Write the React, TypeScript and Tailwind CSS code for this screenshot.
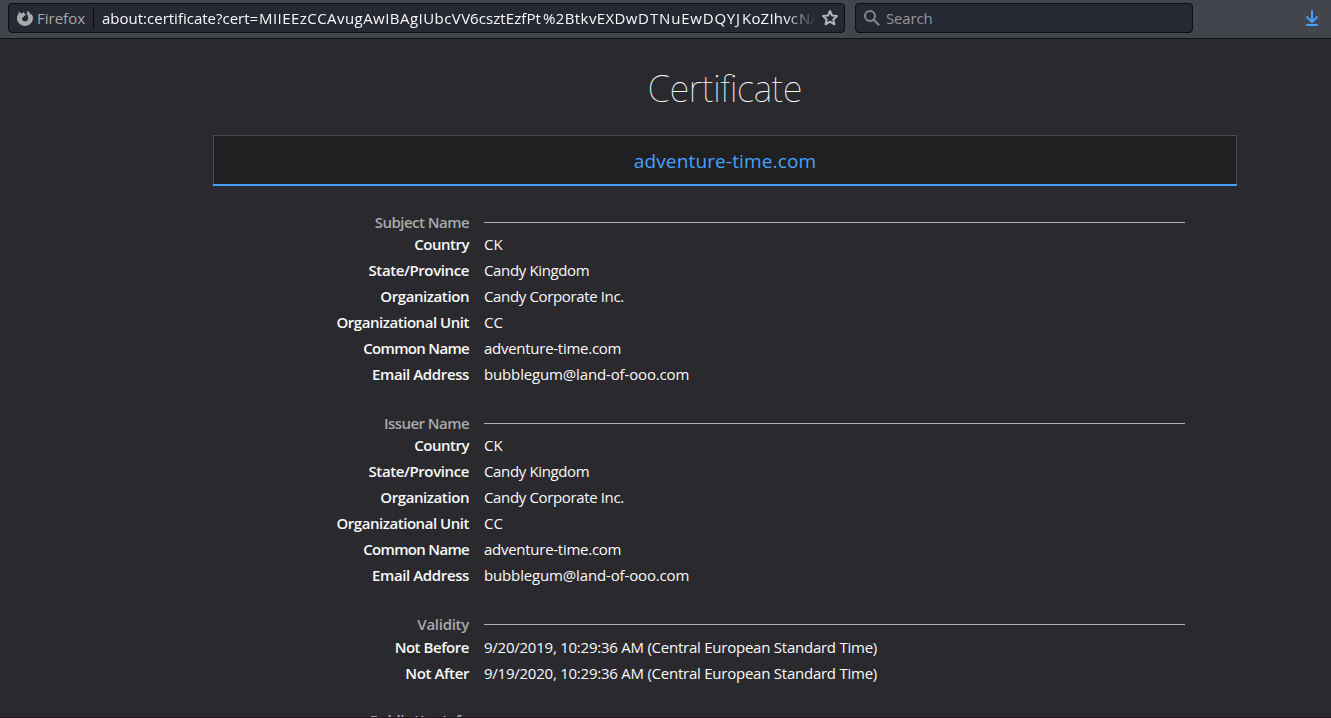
import type { ReactNode } from "react";

type Row = { label: string; value: string; labelSpacing: string; spacing: string };
type Section = { title: string; spacing: string; gaps: string; titleGap: string; rows: Row[] };

const nameRows: Row[] = [
  { label: "Country", value: "CK", labelSpacing: "tracking-[-0.5px]", spacing: "tracking-[0px]" },
  { label: "State/Province", value: "Candy Kingdom", labelSpacing: "tracking-[-0.39px]", spacing: "tracking-[-0.36px]" },
  { label: "Organization", value: "Candy Corporate Inc.", labelSpacing: "tracking-[-0.42px]", spacing: "tracking-[-0.36px]" },
  { label: "Organizational Unit", value: "CC", labelSpacing: "tracking-[-0.46px]", spacing: "tracking-[0px]" },
  { label: "Common Name", value: "adventure-time.com", labelSpacing: "tracking-[-0.68px]", spacing: "tracking-[-0.27px]" },
  { label: "Email Address", value: "bubblegum@land-of-ooo.com", labelSpacing: "tracking-[-0.38px]", spacing: "tracking-[-0.15px]" },
];

const sections: Section[] = [
  { title: "Subject Name", spacing: "tracking-[-0.54px]", gaps: "mb-[27px]", titleGap: "", rows: nameRows },
  { title: "Issuer Name", spacing: "tracking-[-0.56px]", gaps: "mb-[27px]", titleGap: "", rows: nameRows },
  {
    title: "Validity",
    spacing: "tracking-[-0.28px]",
    gaps: "mb-[25px]",
    titleGap: "mb-px",
    rows: [
      { label: "Not Before", value: "9/20/2019, 10:29:36 AM (Central European Standard Time)", labelSpacing: "tracking-[-0.46px]", spacing: "tracking-[-0.24px]" },
      { label: "Not After", value: "9/19/2020, 10:29:36 AM (Central European Standard Time)", labelSpacing: "tracking-[-0.38px]", spacing: "tracking-[-0.24px]" },
    ],
  },
];

function Field({ className, children }: { className: string; children: ReactNode }) {
  return (
    <div className={`flex h-[30px] shrink-0 items-center overflow-hidden rounded-[4px] border border-[#0e0f13] bg-[#262833] ${className}`}>
      {children}
    </div>
  );
}

function FirefoxIcon() {
  return (
    <svg className="ml-2 h-4 w-4 shrink-0" viewBox="0 0 16 16" fill="#a9aaad">
      <path d="M2.1 1.1 C2.3 2.2 2.7 2.8 3.3 3.2 C4.1 2.9 5 3 5.6 3.2 C6 2.4 6.6 1.9 7.4 1.7 C7 2.5 7.2 3.4 7.9 3.9 L9.2 4.5 C9 5.3 8.2 5.6 7.2 5.8 C7.2 6.3 7 6.6 6.2 7.1 C5.2 7.7 4.9 8.5 5.2 9.4 C5.6 10.7 6.9 11.5 8.2 11.4 C10.3 11.2 11.5 9.5 11.2 7.4 C11 6.1 10.3 5 10 3.8 C9.8 2.8 10.2 1.5 11 .6 C11.2 2 12.5 2.5 13.2 3.5 C13.6 4 13.7 4.5 13.9 5 L14.4 3.9 C15.4 5 16 6.5 16 8.1 C16 12.5 12.4 16 8 16 C3.6 16 0 12.5 0 8.1 C0 6 .7 4.4 1.6 3.4 C1.5 2.5 1.6 1.7 2.1 1.1 Z" />
    </svg>
  );
}

function Toolbar() {
  return (
    <header className="flex h-[39px] shrink-0 items-start border-b border-[#111216] bg-[#42454c] pt-[3px] pl-2 text-[15px]">
      <Field className="w-[837px]">
        <FirefoxIcon />
        <span className="ml-[4px] w-[48px] shrink-0 text-[#a6a7ab]">Firefox</span>
        <span className="ml-[8px] h-[22px] w-px shrink-0 bg-[#0e0f13]" />
        <div className="ml-2 flex w-[714px] shrink-0 overflow-hidden whitespace-nowrap text-[#f9f9fa] [mask-image:linear-gradient(to_right,#000_682px,transparent_714px)]">
          <span className="w-[157px] shrink-0">about:certificate?cert=</span>
          <span className="w-[211px] shrink-0 tracking-[0.45px]">MIIEEzCCAvugAwIBAgIUbcVV</span>
          <span className="w-[73px] shrink-0 tracking-[0.1px]">6csztEzfPt</span>
          <span className="w-[107px] shrink-0 tracking-[0.4px]">%2BtkvEXDwD</span>
          <span className="w-[92px] shrink-0 tracking-[0.8px]">TNuEwDQYJ</span>
          <span className="w-[57px] shrink-0 tracking-[0.2px]">KoZIhvc</span>
          <span className="shrink-0">NA</span>
        </div>
        <svg className="ml-[5px] h-[18px] w-[18px] shrink-0" viewBox="0 0 18 18" fill="none" stroke="#b4b5ba" strokeWidth="2" strokeLinejoin="round">
          <path d="M9 2 L11.1 6.6 L16 7.1 L12.3 10.4 L13.4 15.3 L9 12.7 L4.6 15.3 L5.7 10.4 L2 7.1 L6.9 6.6 Z" />
        </svg>
      </Field>
      <Field className="ml-[10px] w-[338px]">
        <svg className="ml-2 h-4 w-4 shrink-0" viewBox="0 0 16 16" fill="none" stroke="#85868c" strokeWidth="2">
          <circle cx="6" cy="6" r="5" />
          <path d="M9.7 9.7 L15.2 15.2" />
        </svg>
        <span className="ml-[6px] tracking-[-0.15px] text-[#94959b]">Search</span>
      </Field>
      <svg className="mt-[7px] ml-[112px] h-4 w-[14px] shrink-0" viewBox="0 0 14 16" fill="none" stroke="#45a1ff" strokeWidth="2" strokeLinecap="round" strokeLinejoin="round">
        <path d="M7 1 V11.5 M2 7 L7 12 L12 7 M2 15 H12" />
      </svg>
    </header>
  );
}

function SectionTitle({ title, spacing, gap }: { title: string; spacing: string; gap: string }) {
  return (
    <div className={`flex h-[18px] shrink-0 items-center ${gap}`}>
      <h2 className={`w-[256px] shrink-0 text-right text-[15px] leading-[18px] font-semibold text-[#a9a9ab] ${spacing}`}>{title}</h2>
      <span className="mt-px ml-[15px] h-px w-[701px] bg-[#b1b1b3]" />
    </div>
  );
}

export default function App() {
  return (
    <div className="flex h-[718px] w-[1331px] flex-col overflow-hidden border-b border-[#241523] bg-[#2a2a2e] font-['Open_Sans',sans-serif] text-[#f9f9fa]">
      <Toolbar />
      <main className="ml-[213px] flex w-[1024px] flex-col">
        <h1 className="mt-[25px] h-[50px] text-center font-['Noto_Sans',sans-serif] text-[36px] leading-[50px] font-thin tracking-[-0.3px]">Certificate</h1>
        <div className="mt-[21px] flex h-[51px] shrink-0 flex-col border border-b-0 border-[#4a4a4f] bg-[#202022]">
          <span className="flex flex-1 items-center justify-center pt-[2px] text-[19px] tracking-[0.14px] text-[#45a1ff]">adventure-time.com</span>
          <span className="-mx-px h-[2px] shrink-0 bg-[#45a1ff]" />
        </div>
        <div className="mt-[27px] flex flex-col">
          {sections.map((s) => (
            <section key={s.title} className={s.gaps}>
              <SectionTitle title={s.title} spacing={s.spacing} gap={s.titleGap} />
              {s.rows.map((r) => (
                <div key={r.label} className="flex h-[26px] items-center text-[15px]">
                  <span className={`w-[256px] shrink-0 text-right font-semibold ${r.labelSpacing}`}>{r.label}</span>
                  <span className={`ml-[15px] whitespace-nowrap ${r.spacing}`}>{r.value}</span>
                </div>
              ))}
            </section>
          ))}
          <SectionTitle title="Public Key Info" spacing="tracking-[-0.5px]" gap="" />
        </div>
      </main>
    </div>
  );
}
